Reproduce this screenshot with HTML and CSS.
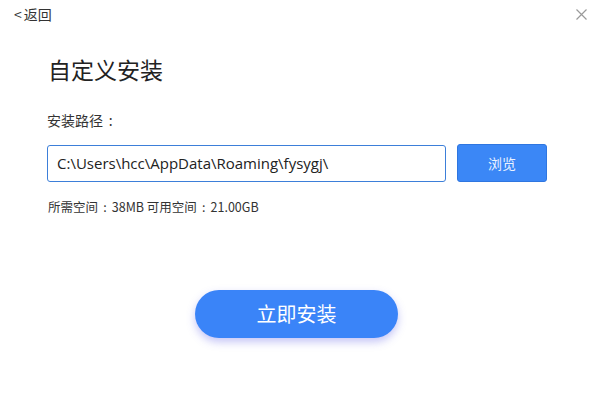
FILE: index.html
```html
<!DOCTYPE html>
<html lang="zh">
<head>
<meta charset="utf-8">
<link rel="stylesheet" href="styles.css">
</head>
<body>
<div class="window">
  <div class="topbar">
    <span class="back"><span class="lt">&lt;</span>返回</span>
    <span class="close">
      <svg width="11" height="11" viewBox="0 0 11 11"><path d="M0.5 0.5L10.5 10.5M10.5 0.5L0.5 10.5" stroke="#9a9a9a" stroke-width="1.2" fill="none"/></svg>
    </span>
  </div>
  <div class="content">
    <h1 class="title">自定义安装</h1>
    <div class="label">安装路径<span class="colon">:</span></div>
    <div class="path-row">
      <div class="path-input">C:\Users\hcc\AppData\Roaming\fysygj\</div>
      <div class="browse">浏览</div>
    </div>
    <div class="space">所需空间<span class="colon">:</span>38MB 可用空间<span class="colon">:</span>21.00GB</div>
  </div>
  <div class="actions">
    <div class="install">立即安装</div>
  </div>
</div>
</body>
</html>
```
FILE: styles.css
```css
html, body {
  margin: 0;
  padding: 0;
  background: #ffffff;
}
body {
  font-family: "Noto Sans CJK SC", "Noto Sans", sans-serif;
  color: #333333;
}
.window {
  width: 595px;
  height: 395px;
  display: flex;
  flex-direction: column;
}
.topbar {
  display: flex;
  justify-content: space-between;
  align-items: center;
  height: 30px;
  padding: 0 8px 0 14px;
}
.back {
  font-size: 14px;
  color: #333;
  line-height: 30px;
  margin-top: -2px;
}
.lt {
  margin-right: 2px;
}
.colon {
  display: inline-block;
  width: 1.1em;
  text-align: center;
}
.close {
  display: flex;
  width: 11px;
  height: 11px;
  margin-top: -2px;
}
.content {
  padding: 0 48px 0 47px;
}
.title {
  margin: 23px 0 0 1px;
  font-size: 23px;
  font-weight: 400;
  line-height: 32px;
  color: #222;
}
.label {
  margin-top: 25px;
  font-size: 14px;
  line-height: 20px;
  color: #333;
}
.path-row {
  display: flex;
  gap: 11px;
  margin-top: 15px;
}
.path-input {
  width: 399px;
  height: 37px;
  box-sizing: border-box;
  border: 1px solid #3d7fd9;
  border-radius: 3px;
  padding: 0 9px;
  font-family: "Open Sans", "Noto Sans", sans-serif;
  font-size: 15px;
  line-height: 35px;
  color: #222;
  white-space: nowrap;
}
.browse {
  width: 90px;
  height: 38px;
  margin-top: -1px;
  box-sizing: border-box;
  background: #3b87f6;
  border: 1px solid #2f76e0;
  border-radius: 3px;
  color: #eaf2ff;
  font-size: 14px;
  line-height: 36px;
  text-align: center;
}
.space {
  margin-top: 16px;
  margin-left: 1px;
  font-size: 12.5px;
  line-height: 18px;
  color: #333;
}
.actions {
  display: flex;
  justify-content: center;
  margin-top: 74px;
  padding-right: 2px;
}
.install {
  width: 203px;
  height: 48px;
  border-radius: 24px;
  background: #3a84f8;
  color: #ffffff;
  font-size: 20px;
  line-height: 47px;
  text-align: center;
  box-shadow: 0 4px 8px rgba(90, 90, 230, 0.35);
}
```
